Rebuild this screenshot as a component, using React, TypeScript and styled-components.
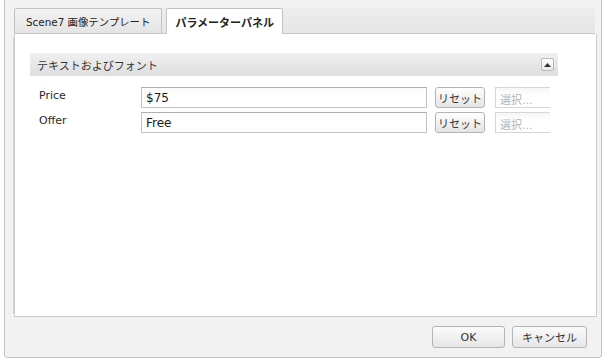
import React from "react"
import styled, { createGlobalStyle } from "styled-components"

const GlobalStyle = createGlobalStyle`
  body {
    margin: 0;
    background: #ffffff;
    font-family: "DejaVu Sans", "Noto Sans CJK JP", sans-serif;
    font-size: 11px;
    color: #222;
  }
`

const fields = [
  { label: "Price", value: "$75" },
  { label: "Offer", value: "Free" },
]

export default function App() {
  return (
    <>
      <GlobalStyle />
      <Dialog>
        <TabStrip>
          <Tab>Scene7 画像テンプレート</Tab>
          <Tab active>パラメーターパネル</Tab>
        </TabStrip>
        <Panel>
          <SectionHeader>
            <span>テキストおよびフォント</span>
            <CollapseButton>
              <svg width="7" height="4" viewBox="0 0 7 4">
                <path d="M0 4 L3.5 0 L7 4 Z" fill="#333" />
              </svg>
            </CollapseButton>
          </SectionHeader>
          <Rows>
            {fields.map((f) => (
              <Row key={f.label}>
                <Label>{f.label}</Label>
                <TextInput>{f.value}</TextInput>
                <SmallButton>リセット</SmallButton>
                <SelectBox>選択...</SelectBox>
              </Row>
            ))}
          </Rows>
        </Panel>
        <Footer>
          <FooterButton wide>OK</FooterButton>
          <FooterButton>キャンセル</FooterButton>
        </Footer>
      </Dialog>
    </>
  )
}

const Dialog = styled.div`
  margin-left: 4px;
  width: 598px;
  height: 358px;
  box-sizing: border-box;
  border: 1px solid #c4c4c4;
  border-top: none;
  border-radius: 0 0 4px 4px;
  background: #f2f2f2;
  padding: 8px 6px 0 9px;
  display: flex;
  flex-direction: column;
`

const TabStrip = styled.div`
  display: flex;
  gap: 4px;
  height: 26px;
  box-sizing: border-box;
  background: linear-gradient(#ededed, #e6e6e6);
  border-bottom: 1px solid #c6c6c6;
`

const Tab = styled.div<{ active?: boolean }>`
  display: flex;
  align-items: center;
  box-sizing: border-box;
  height: ${(p) => (p.active ? "26px" : "25px")};
  padding: 0 ${(p) => (p.active ? "8px" : "11px")};
  border: 1px solid #c2c2c2;
  border-bottom: none;
  border-radius: 2px 2px 0 0;
  background: ${(p) => (p.active ? "#ffffff" : "linear-gradient(#f3f3f3, #e4e4e4)")};
  font-weight: ${(p) => (p.active ? "bold" : "normal")};
  font-size: ${(p) => (p.active ? "11px" : "10.4px")};
  color: #222;
  white-space: nowrap;
`

const Panel = styled.div`
  width: 583px;
  height: 283px;
  box-sizing: border-box;
  background: #ffffff;
  border: 1px solid #cccccc;
  border-top: none;
  box-shadow: -4px 0 0 -3px #d4d4d4;
  padding: 19px 38px 0 15px;
`

const SectionHeader = styled.div`
  display: flex;
  align-items: center;
  justify-content: space-between;
  height: 23px;
  padding: 0 4px 0 7px;
  background: linear-gradient(#f0f0f0, #dedede);
  color: #333;
  font-size: 11px;
`

const CollapseButton = styled.div`
  width: 13px;
  height: 13px;
  box-sizing: border-box;
  border: 1px solid #b8b8b8;
  border-radius: 2px;
  background: linear-gradient(#ffffff, #e8e8e8);
  display: flex;
  align-items: center;
  justify-content: center;
`

const Rows = styled.div`
  display: flex;
  flex-direction: column;
  gap: 4px;
  padding: 11px 0 0 9px;
`

const Row = styled.div`
  display: flex;
  align-items: flex-start;
  height: 21px;
`

const Label = styled.div`
  width: 102px;
  padding-top: 2px;
  font-size: 11px;
  color: #2a2a2a;
`

const TextInput = styled.div`
  width: 286px;
  height: 21px;
  box-sizing: border-box;
  border: 1px solid #c4c4c4;
  border-top-color: #b0b0b0;
  background: linear-gradient(#fafafa, #ffffff 40%);
  padding: 3px 4px 0;
  font-size: 12px;
  color: #1a1a1a;
`

const SmallButton = styled.div`
  margin-left: 8px;
  width: 50px;
  height: 21px;
  box-sizing: border-box;
  border: 1px solid #b4b4b4;
  border-radius: 3px;
  background: linear-gradient(#ffffff, #e4e4e4);
  display: flex;
  align-items: center;
  justify-content: center;
  font-size: 11px;
  color: #333;
`

const SelectBox = styled.div`
  margin-left: 10px;
  width: 55px;
  height: 21px;
  box-sizing: border-box;
  border: 1px solid #d6d6d6;
  border-right: none;
  background: linear-gradient(#f6f6f6, #ffffff 40%);
  padding: 3px 4px 0;
  font-size: 11px;
  color: #b4b4b4;
  white-space: nowrap;
  overflow: hidden;
`

const Footer = styled.div`
  flex: 1;
  display: flex;
  align-items: center;
  justify-content: flex-end;
  gap: 7px;
  padding-right: 8px;
`

const FooterButton = styled.div<{ wide?: boolean }>`
  width: ${(p) => (p.wide ? "73px" : "75px")};
  height: 22px;
  box-sizing: border-box;
  border: 1px solid #b4b4b4;
  border-radius: 3px;
  background: linear-gradient(#fbfbfb, #e6e6e6);
  display: flex;
  align-items: center;
  justify-content: center;
  font-size: 11px;
  color: #333;
`
